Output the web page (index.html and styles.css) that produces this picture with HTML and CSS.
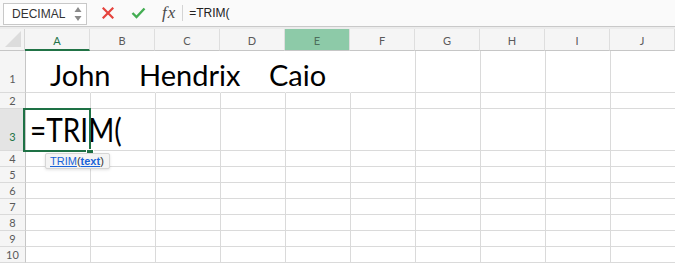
FILE: index.html
```html
<!DOCTYPE html>
<html>
<head>
<meta charset="utf-8">
<link rel="stylesheet" href="styles.css">
</head>
<body>
<div class="app">
  <div class="toolbar">
    <div class="namebox">
      <span class="namebox-text">DECIMAL</span>
      <svg class="spinner" width="8" height="16" viewBox="0 0 8 16"><path d="M4 1 L7.5 6 L0.5 6 Z" fill="#8a8a8a"/><path d="M0.5 10 L7.5 10 L4 15 Z" fill="#8a8a8a"/></svg>
    </div>
    <div class="fbtn cancel">
      <svg width="12" height="12" viewBox="0 0 12 12"><path d="M1.5 1.5 L10.5 10.5 M10.5 1.5 L1.5 10.5" stroke="#e5433d" stroke-width="2.2" stroke-linecap="square"/></svg>
    </div>
    <div class="fbtn">
      <svg width="15" height="12" viewBox="0 0 15 12"><path d="M1.5 6 L5.5 10 L13.5 1.5" stroke="#43ad52" stroke-width="2.4" fill="none"/></svg>
    </div>
    <div class="fx">fx</div>
    <div class="sep"></div>
    <div class="formula">=TRIM(</div>
  </div>
  <div class="sheet">
    <div class="row head">
      <div class="corner"><svg width="16" height="16" viewBox="0 0 16 16"><path d="M16 0 L16 16 L0 16 Z" fill="#dcdcdc"/></svg></div>
      <div class="ch active">A</div><div class="ch">B</div><div class="ch">C</div><div class="ch">D</div><div class="ch hover">E</div><div class="ch">F</div><div class="ch">G</div><div class="ch">H</div><div class="ch">I</div><div class="ch">J</div>
    </div>
    <div class="row tall">
      <div class="rh">1</div>
      <div class="cell open"><span class="big john">John</span></div><div class="cell open"><span class="big hendrix">Hendrix</span></div><div class="cell open"></div><div class="cell open"><span class="big caio">Caio</span></div><div class="cell open"></div><div class="cell"></div><div class="cell"></div><div class="cell"></div><div class="cell"></div><div class="cell"></div>
    </div>
    <div class="row">
      <div class="rh">2</div>
      <div class="cell"></div><div class="cell"></div><div class="cell"></div><div class="cell"></div><div class="cell"></div><div class="cell"></div><div class="cell"></div><div class="cell"></div><div class="cell"></div><div class="cell"></div>
    </div>
    <div class="row tall">
      <div class="rh sel">3</div>
      <div class="cell open"><span class="big formula-big">=TRIM(</span></div><div class="cell"></div><div class="cell"></div><div class="cell"></div><div class="cell"></div><div class="cell"></div><div class="cell"></div><div class="cell"></div><div class="cell"></div><div class="cell"></div>
    </div>
    <div class="row">
      <div class="rh">4</div>
      <div class="cell"></div><div class="cell"></div><div class="cell"></div><div class="cell"></div><div class="cell"></div><div class="cell"></div><div class="cell"></div><div class="cell"></div><div class="cell"></div><div class="cell"></div>
    </div>
    <div class="row">
      <div class="rh">5</div>
      <div class="cell"></div><div class="cell"></div><div class="cell"></div><div class="cell"></div><div class="cell"></div><div class="cell"></div><div class="cell"></div><div class="cell"></div><div class="cell"></div><div class="cell"></div>
    </div>
    <div class="row">
      <div class="rh">6</div>
      <div class="cell"></div><div class="cell"></div><div class="cell"></div><div class="cell"></div><div class="cell"></div><div class="cell"></div><div class="cell"></div><div class="cell"></div><div class="cell"></div><div class="cell"></div>
    </div>
    <div class="row">
      <div class="rh">7</div>
      <div class="cell"></div><div class="cell"></div><div class="cell"></div><div class="cell"></div><div class="cell"></div><div class="cell"></div><div class="cell"></div><div class="cell"></div><div class="cell"></div><div class="cell"></div>
    </div>
    <div class="row">
      <div class="rh">8</div>
      <div class="cell"></div><div class="cell"></div><div class="cell"></div><div class="cell"></div><div class="cell"></div><div class="cell"></div><div class="cell"></div><div class="cell"></div><div class="cell"></div><div class="cell"></div>
    </div>
    <div class="row">
      <div class="rh">9</div>
      <div class="cell"></div><div class="cell"></div><div class="cell"></div><div class="cell"></div><div class="cell"></div><div class="cell"></div><div class="cell"></div><div class="cell"></div><div class="cell"></div><div class="cell"></div>
    </div>
    <div class="row">
      <div class="rh">10</div>
      <div class="cell"></div><div class="cell"></div><div class="cell"></div><div class="cell"></div><div class="cell"></div><div class="cell"></div><div class="cell"></div><div class="cell"></div><div class="cell"></div><div class="cell"></div>
    </div>
    <div class="selection"><div class="handle"></div></div>
    <div class="tip"><span class="fn">TRIM</span>(<span class="arg">text</span>)</div>
  </div>
</div>
</body>
</html>
```
FILE: styles.css
```css
html, body {
  margin: 0;
  padding: 0;
  background: #ffffff;
}
.app {
  width: 675px;
  height: 263px;
  overflow: hidden;
  font-family: "Liberation Sans", Arial, sans-serif;
}
.toolbar {
  height: 26px;
  display: flex;
  align-items: center;
  background: #fafafa;
  border-bottom: 1px solid #c9c9c9;
  box-shadow: 0 2px 0 #ececec;
  margin-bottom: 2px;
  padding-left: 3px;
}
.namebox {
  width: 84px;
  height: 22px;
  margin-top: 1px;
  border: 1px solid #c8c8c8;
  background: #ffffff;
  display: flex;
  align-items: center;
  justify-content: space-between;
  padding: 0 4px 0 8px;
  box-sizing: border-box;
}
.namebox-text {
  font-size: 12px;
  color: #333333;
}
.spinner {
  display: block;
}
.fbtn {
  width: 28px;
  display: flex;
  justify-content: center;
  margin-left: 2px;
}
.fbtn.cancel {
  margin-left: 7px;
}
.fx {
  margin-left: 10px;
  font-family: "Liberation Serif", "DejaVu Serif", serif;
  font-style: italic;
  font-size: 17px;
  color: #4a4a4a;
  letter-spacing: 1px;
}
.sep {
  width: 1px;
  height: 16px;
  background: #d4d4d4;
  margin-left: 6px;
}
.formula {
  margin-left: 6px;
  font-size: 12px;
  color: #222222;
}
.sheet {
  position: relative;
}
.row {
  display: flex;
  height: 16px;
}
.row.tall {
  height: 42px;
}
.row.head {
  height: 22px;
}
.corner {
  width: 26px;
  box-sizing: border-box;
  background: #f4f4f4;
  border-right: 1px solid #d6d6d6;
  border-bottom: 1px solid #c6c6c6;
  display: flex;
  align-items: flex-end;
  justify-content: flex-end;
  padding: 0 3px 3px 0;
}
.corner svg {
  display: block;
}
.ch {
  width: 65px;
  flex: none;
  box-sizing: border-box;
  background: #f5f5f5;
  border-right: 1px solid #dedede;
  border-bottom: 1px solid #c6c6c6;
  font-family: Lato, "Liberation Sans", sans-serif;
  font-size: 11px;
  color: #5a5a5a;
  display: flex;
  align-items: center;
  justify-content: center;
  padding-top: 1px;
}
.ch.active {
  color: #217346;
  border-bottom: 2px solid #217346;
  padding-top: 2px;
}
.ch.hover {
  background: #8dcaa8;
  color: #4e6e5c;
}
.rh {
  width: 26px;
  flex: none;
  box-sizing: border-box;
  background: #f5f5f5;
  border-right: 1px solid #c6c6c6;
  border-bottom: 1px solid #dadada;
  font-family: Lato, "Liberation Sans", sans-serif;
  font-size: 11px;
  color: #5a5a5a;
  display: flex;
  align-items: flex-end;
  justify-content: center;
  padding-bottom: 2px;
  line-height: 11px;
}
.tall .rh {
  padding-bottom: 8px;
}
.rh.sel {
  background: #e4e4e4;
  color: #217346;
}
.cell {
  width: 65px;
  flex: none;
  box-sizing: border-box;
  border-right: 1px solid #dadada;
  border-bottom: 1px solid #dadada;
  position: relative;
  white-space: nowrap;
}
.cell.open {
  border-right-color: transparent;
}
.big {
  display: block;
  font-family: Lato, "Liberation Sans", sans-serif;
  color: #000000;
  line-height: 1;
}
.john {
  font-size: 29px;
  padding: 9px 0 0 24px;
}
.hendrix {
  font-size: 29px;
  padding: 9px 0 0 48px;
}
.caio {
  font-size: 29px;
  padding: 9px 0 0 48px;
}
.formula-big {
  font-size: 28px;
  padding: 9px 0 0 4px;
  transform: scaleY(1.2);
  transform-origin: left bottom;
}
.selection {
  position: absolute;
  left: 23px;
  top: 79px;
  width: 68px;
  height: 44px;
  box-sizing: border-box;
  border: 2px solid #1e7145;
}
.handle {
  position: absolute;
  right: -5px;
  bottom: -5px;
  width: 6px;
  height: 5px;
  background: #1e7145;
  border: 1px solid #ffffff;
  border-bottom: none;
}
.tip {
  position: absolute;
  left: 45px;
  top: 124px;
  height: 16px;
  padding: 0 5px 0 4px;
  box-sizing: border-box;
  background: #f4f4f4;
  border: 1px solid #d6d6d6;
  border-radius: 2px;
  box-shadow: 0 1px 3px rgba(0, 0, 0, 0.12);
  font-family: "Liberation Sans", Arial, sans-serif;
  font-size: 11px;
  line-height: 14px;
  color: #333333;
}
.fn {
  color: #1a63d8;
  text-decoration: underline;
}
.arg {
  color: #1a63d8;
  font-weight: bold;
  text-decoration: underline;
}
```
